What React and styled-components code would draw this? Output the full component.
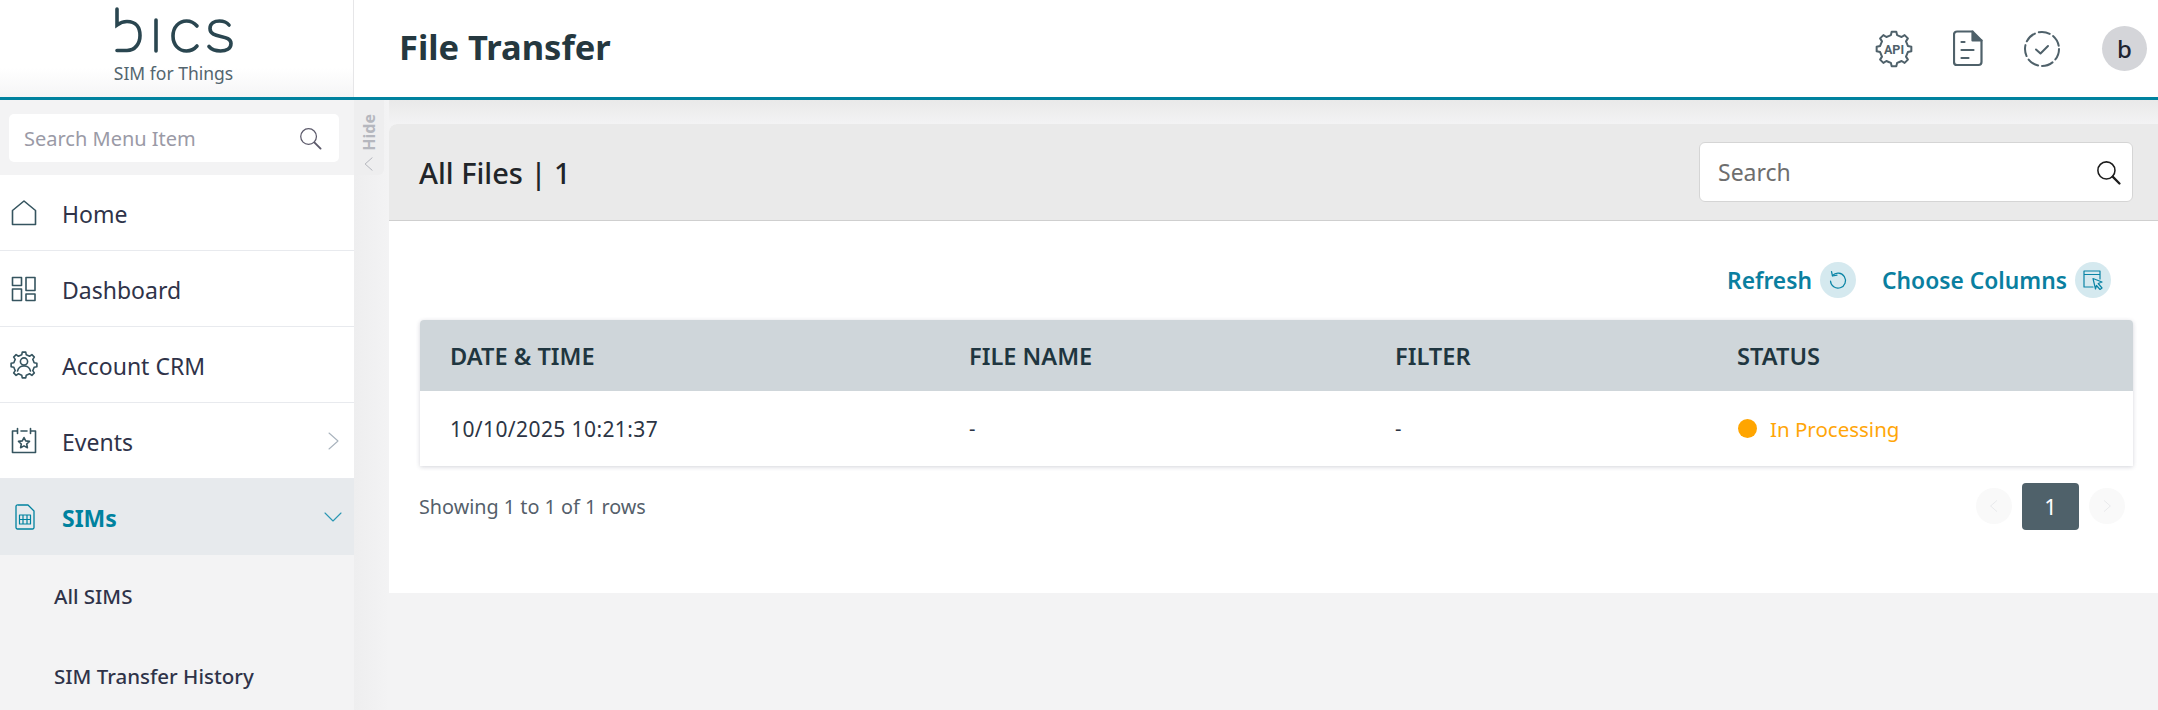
import React from "react";
import styled, { createGlobalStyle } from "styled-components";

const GlobalStyle = createGlobalStyle`
  html, body {
    margin: 0;
    padding: 0;
    height: 100%;
    overflow: hidden;
    background: #f3f3f4;
    font-family: "Noto Sans", "Liberation Sans", sans-serif;
  }
  * { box-sizing: border-box; }
`;

// gear outline with rounded valleys, used by the CRM and API icons
const gearPath = (cx, cy, outer, inner, teeth) => {
  const step = (Math.PI * 2) / teeth;
  const at = (r, a) => `${(cx + r * Math.cos(a)).toFixed(2)} ${(cy + r * Math.sin(a)).toFixed(2)}`;
  let d = "";
  for (let i = 0; i < teeth; i++) {
    const a = i * step - Math.PI / 2;
    d += `${i === 0 ? "M" : "L"}${at(outer, a - step * 0.17)}`;
    d += `L${at(outer, a + step * 0.17)}`;
    d += `L${at(inner, a + step * 0.28)}`;
    d += `Q${at(inner * 0.99, a + step * 0.5)} ${at(inner, a + step * 0.72)}`;
  }
  return d + "Z";
};

const Icon = ({ size = 28, w, h, color = "#35545f", sw = 1.6, children, box = "0 0 28 28" }) => (
  <svg width={w || size} height={h || size} viewBox={box} fill="none" stroke={color} strokeWidth={sw} strokeLinecap="round" strokeLinejoin="round">
    {children}
  </svg>
);

const SearchGlyph = ({ size, color, sw }) => (
  <Icon size={size} color={color} sw={sw} box="0 0 24 24">
    <circle cx="10" cy="10" r="8.2" />
    <path d="M16 16l6.5 6.5" strokeWidth={sw + 0.7} />
  </Icon>
);

const HomeIcon = () => (
  <Icon>
    <path d="M2.5 25.5V11.5L14 2l11.5 9.5v14z" />
  </Icon>
);
const DashIcon = () => (
  <Icon>
    <rect x="2.5" y="2.5" width="9" height="8" />
    <rect x="16" y="2.5" width="9" height="13" />
    <rect x="2.5" y="14" width="9" height="11.5" />
    <rect x="16" y="19" width="9" height="6.5" />
  </Icon>
);
const CrmIcon = () => (
  <Icon>
    <path d={gearPath(14, 14, 13, 10.4, 8)} />
    <circle cx="14" cy="10.5" r="3.6" />
    <path d="M7.5 20c.8-3.5 3.2-5 6.5-5s5.7 1.5 6.5 5" />
  </Icon>
);
const EventIcon = () => (
  <Icon>
    <path d="M7 4H2.5v21.5h23V4H21M11 4h6M7.5 1.5v5M20.5 1.5v5" />
    <path d="M14 10.5l1.7 3.4 3.8.5-2.8 2.6.7 3.7-3.4-1.8-3.4 1.8.7-3.7-2.8-2.6 3.8-.5z" />
  </Icon>
);
const SimIcon = () => (
  <Icon w={20} h={26} box="0 0 20 26" color="#00829f" sw={1.3}>
    <path d="M3 1h10l6 6v16.5a1.5 1.5 0 0 1-1.5 1.5h-15a1.5 1.5 0 0 1-1.5-1.5V2.5A1.5 1.5 0 0 1 3 1z" />
    <path d="M4.5 11h11v9h-11zM4.5 15.5h11M8 11v4.5M12 11v4.5M8 15.5V20M12 15.5V20" strokeWidth="1.2" />
  </Icon>
);
const Chevron = ({ dir, color, size = 18 }) => (
  <Icon size={size} color={color} sw={1.1} box="0 0 18 18">
    {dir === "right" && <path d="M5 1l9 8-9 8" />}
    {dir === "left" && <path d="M13 1L4 9l9 8" />}
    {dir === "down" && <path d="M1 5l8 8 8-8" />}
  </Icon>
);
const ApiIcon = () => (
  <Icon size={38} box="0 0 38 38" color="#4f616a" sw={2}>
    <path d={gearPath(19, 19, 17.5, 14.2, 8)} />
    <text x="19" y="23.5" fontFamily="Roboto, sans-serif" fontWeight="700" fontSize="12.5" textAnchor="middle" fill="#4f616a" stroke="none">API</text>
  </Icon>
);
const DocIcon = () => (
  <Icon w={30} h={37} box="0 0 30 37" color="#4f616a" sw={2.2}>
    <path d="M4 1.5h15.5l9 9V32a3 3 0 0 1-3 3H4a3 3 0 0 1-3-3V4.5a3 3 0 0 1 3-3z" />
    <path d="M19.5 1.5v9h9" fill="#4f616a" />
    <path d="M8.5 12h3M8.5 20h12M8.5 28h7" />
  </Icon>
);
const TaskIcon = () => (
  <Icon size={38} box="0 0 38 38" color="#4f616a" sw={2}>
    <circle cx="19" cy="19" r="17" strokeDasharray="11.26 4" />
    <path d="M13 19.5l4.5 4 7.5-7.5" />
  </Icon>
);
const RefreshIcon = () => (
  <Icon size={20} box="0 0 20 20" color="#0a84a5" sw={1.2}>
    <path d="M4.5 5.5a7.5 7.5 0 1 1-2 5.5" />
    <path d="M3.5 1.5l1 4.5 4.5-.8" />
  </Icon>
);
const ColumnsIcon = () => (
  <Icon size={20} box="0 0 20 20" color="#0a84a5" sw={1.2}>
    <path d="M17 9V1H1v16h9M1 4.5h16" />
    <path d="M10 8.5l9 3.5-3.8 1.5L19 18l-2 1.5-3.5-4-1 3.5z" fill="#d5e9ef" />
  </Icon>
);

const Page = styled.div`
  height: 710px;
  width: 2158px;
  display: flex;
  flex-direction: column;
  overflow: hidden;
  color: #2f3349;
`;

const Header = styled.header`
  flex: 0 0 100px;
  display: flex;
  background: #fff;
  border-bottom: 3px solid #00829f;
`;

const LogoCell = styled.div`
  flex: 0 0 354px;
  display: flex;
  flex-direction: column;
  align-items: center;
  padding: 7px 6px 0 0;
  border-right: 1px solid #e6e6e8;
  background: linear-gradient(#fff 70%, #f5f5f6);
`;

const Tagline = styled.div`
  margin-top: 8px;
  font-size: 17.5px;
  line-height: 22px;
  color: #53656e;
`;

const TitleBar = styled.div`
  flex: 1;
  display: flex;
  align-items: center;
  justify-content: space-between;
  padding: 0 11px 0 45px;
`;

const PageTitle = styled.h1`
  margin: 0 0 5px;
  font-size: 34.5px;
  font-weight: 700;
  color: #25383f;
`;

const HeaderTools = styled.div`
  display: flex;
  align-items: center;
`;

const ToolSlot = styled.div`
  display: flex;
  justify-content: center;
  width: 74px;
`;

const Avatar = styled.div`
  width: 45px;
  height: 45px;
  margin-left: 23px;
  border-radius: 50%;
  background: #d4d5d9;
  display: flex;
  align-items: center;
  justify-content: center;
  font-size: 24px;
  font-weight: 500;
  color: #1d2430;
`;

const Body = styled.div`
  flex: 1;
  display: flex;
  min-height: 0;
`;

const Sidebar = styled.aside`
  flex: 0 0 354px;
  display: flex;
  flex-direction: column;
  background: #fff;
`;

const MenuSearchWrap = styled.div`
  flex: 0 0 75px;
  padding: 14px 15px 13px 9px;
  background: #f3f3f4;
`;

const MenuSearch = styled.div`
  height: 48px;
  background: #fff;
  border-radius: 5px;
  display: flex;
  align-items: center;
  justify-content: space-between;
  padding: 0 17px 0 15px;
  font-size: 20px;
  color: #9a9aa6;
`;

const MenuRow = styled.div`
  flex: 0 0 76px;
  display: flex;
  align-items: center;
  padding: 0 12px 0 10px;
  border-bottom: 1px solid ${(p) => (p.$active ? "transparent" : "#e8eaee")};
  background: ${(p) => (p.$active ? "#e7eaed" : "#fff")};
  color: ${(p) => (p.$active ? "#00829f" : "#2f3349")};
  font-size: 23px;
  font-weight: ${(p) => (p.$active ? 700 : 400)};
`;

const MenuIcon = styled.span`
  flex: 0 0 52px;
  display: flex;
  padding-left: ${(p) => (p.$inset ? 5 : 0)}px;
`;

const MenuLabel = styled.span`
  flex: 1;
  padding-top: 2px;
`;

const SubMenu = styled.div`
  flex: 1;
  background: #f3f3f4;
  padding: 24px 0 0 54px;
`;

const SubItem = styled.div`
  height: 80px;
  font-size: 20.5px;
  line-height: 34px;
  font-weight: 500;
  color: #2f3349;
`;

const Gutter = styled.div`
  flex: 0 0 35px;
  background: linear-gradient(90deg, #eeeeef, #f3f3f4);
`;

const HideTab = styled.div`
  width: 30px;
  height: 75px;
  background: #eeeeef;
  border-radius: 0 0 6px 0;
  display: flex;
  flex-direction: column;
  align-items: center;
  padding-top: 14px;
  gap: 6px;
`;

const HideLabel = styled.span`
  writing-mode: vertical-rl;
  transform: rotate(180deg);
  font-size: 16px;
  font-weight: 700;
  color: #b5b7be;
  line-height: 16px;
`;

const Content = styled.main`
  flex: 1;
  padding-top: 24px;
  background: linear-gradient(#e9e9e9, #f3f3f4 24px);
  min-width: 0;
`;

const Panel = styled.section`
  height: 469px;
  background: #fff;
  border-radius: 8px 0 0 0;
  overflow: hidden;
`;

const PanelHead = styled.div`
  height: 97px;
  background: #eaeaea;
  border-bottom: 1px solid #cfcfcf;
  display: flex;
  align-items: center;
  justify-content: space-between;
  padding: 0 25px 0 30px;
`;

const PanelTitle = styled.h2`
  margin: 0;
  font-size: 29px;
  font-weight: 500;
  color: #212529;
`;

const TableSearch = styled.div`
  width: 434px;
  height: 60px;
  background: #fff;
  border: 1px solid #d5d5d5;
  border-radius: 6px;
  display: flex;
  align-items: center;
  justify-content: space-between;
  padding: 0 11px 0 18px;
  font-size: 23px;
  color: #6e6e6e;
`;

const PanelBody = styled.div`
  padding: 41px 25px 0 31px;
`;

const Actions = styled.div`
  display: flex;
  justify-content: flex-end;
  gap: 26px;
  padding-right: 22px;
  height: 58px;
`;

const ActionButton = styled.div`
  display: flex;
  align-items: center;
  align-self: flex-start;
  gap: 8px;
  font-size: 22.8px;
  font-weight: 600;
  color: #0a7fa0;
`;

const ActionIcon = styled.span`
  width: 36px;
  height: 36px;
  border-radius: 50%;
  background: #d5e9ef;
  display: flex;
  align-items: center;
  justify-content: center;
`;

const Table = styled.div`
  border-radius: 4px 4px 0 0;
  box-shadow: 0 1px 4px rgba(60, 64, 90, 0.22);
  background: #fff;
`;

const Row = styled.div`
  display: grid;
  grid-template-columns: 519px 426px 342px 1fr;
  align-items: center;
  height: ${(p) => (p.$head ? 71 : 75)}px;
  background: ${(p) => (p.$head ? "#cfd6da" : "#fff")};
  border-radius: ${(p) => (p.$head ? "4px 4px 0 0" : "0")};
  color: ${(p) => (p.$head ? "#1f3640" : "#2c3545")};
  font-size: ${(p) => (p.$head ? 23.6 : 20)}px;
  font-weight: ${(p) => (p.$head ? 600 : 400)};
`;

const Cell = styled.div`
  padding-left: 30px;
`;

const DateCell = styled(Cell)`
  font-size: 21px;
  letter-spacing: 0.4px;
`;

const Status = styled.div`
  display: flex;
  align-items: center;
  gap: 13px;
  padding-left: 31px;
  font-size: 20.5px;
  color: #ffa609;
`;

const Dot = styled.span`
  width: 19px;
  height: 19px;
  border-radius: 50%;
  background: #ffa500;
`;

const Footer = styled.div`
  display: flex;
  align-items: center;
  justify-content: space-between;
  height: 64px;
  margin: 8px 0 0 -1px;
  font-size: 19.8px;
  color: #555f6b;
`;

const Pager = styled.div`
  display: flex;
  align-items: center;
  gap: 10px;
  padding-right: 8px;
`;

const PagerArrow = styled.span`
  width: 36px;
  height: 36px;
  border-radius: 50%;
  background: #f9f9f9;
  display: flex;
  align-items: center;
  justify-content: center;
`;

const PagerCurrent = styled.span`
  width: 57px;
  height: 47px;
  border-radius: 4px;
  background: #4f616a;
  color: #fff;
  font-size: 22px;
  display: flex;
  align-items: center;
  justify-content: center;
`;

const menu = [
  { label: "Home", icon: <HomeIcon /> },
  { label: "Dashboard", icon: <DashIcon /> },
  { label: "Account CRM", icon: <CrmIcon /> },
  { label: "Events", icon: <EventIcon />, more: true },
];

export default function App() {
  return (
    <Page>
      <GlobalStyle />
      <Header>
        <LogoCell>
          <svg width="120" height="47" viewBox="0 0 120 47" fill="none" stroke="#2a4650" strokeWidth="3.6" strokeLinecap="round">
            <path d="M3 2v16c4-3 7-3.5 10-3.5 9 0 13 6 13 14s-5 15-13 15H3" />
            <path d="M42 13v31" />
            <path d="M83 19c-3-3.5-6-5-10.5-5C65 14 59 20 59 29s6 15 13.5 15c4.5 0 7.5-1.5 10.5-5" />
            <path d="M115 18c-2-2.5-6-4-9.5-4-5 0-9.5 2-9.5 7.5 0 11 21 5 21 15 0 5.5-5 7.5-10.5 7.5-4.5 0-9-1.5-11.5-4.5" />
          </svg>
          <Tagline>SIM for Things</Tagline>
        </LogoCell>
        <TitleBar>
          <PageTitle>File Transfer</PageTitle>
          <HeaderTools>
            <ToolSlot><ApiIcon /></ToolSlot>
            <ToolSlot><DocIcon /></ToolSlot>
            <ToolSlot><TaskIcon /></ToolSlot>
            <Avatar>b</Avatar>
          </HeaderTools>
        </TitleBar>
      </Header>
      <Body>
        <Sidebar>
          <MenuSearchWrap>
            <MenuSearch>
              Search Menu Item
              <SearchGlyph size={23} color="#5c5a6b" sw={1.3} />
            </MenuSearch>
          </MenuSearchWrap>
          {menu.map((item) => (
            <MenuRow key={item.label}>
              <MenuIcon>{item.icon}</MenuIcon>
              <MenuLabel>{item.label}</MenuLabel>
              {item.more && <Chevron dir="right" color="#a9b3bd" />}
            </MenuRow>
          ))}
          <MenuRow $active>
            <MenuIcon $inset><SimIcon /></MenuIcon>
            <MenuLabel>SIMs</MenuLabel>
            <Chevron dir="down" color="#2a97b3" />
          </MenuRow>
          <SubMenu>
            <SubItem>All SIMS</SubItem>
            <SubItem>SIM Transfer History</SubItem>
          </SubMenu>
        </Sidebar>
        <Gutter>
          <HideTab>
            <HideLabel>Hide</HideLabel>
            <Chevron dir="left" color="#a9abb3" size={14} />
          </HideTab>
        </Gutter>
        <Content>
          <Panel>
            <PanelHead>
              <PanelTitle>All Files | 1</PanelTitle>
              <TableSearch>
                Search
                <SearchGlyph size={25} color="#1d1d1d" sw={1.5} />
              </TableSearch>
            </PanelHead>
            <PanelBody>
              <Actions>
                <ActionButton>Refresh<ActionIcon><RefreshIcon /></ActionIcon></ActionButton>
                <ActionButton>Choose Columns<ActionIcon><ColumnsIcon /></ActionIcon></ActionButton>
              </Actions>
              <Table>
                <Row $head>
                  <Cell>DATE &amp; TIME</Cell>
                  <Cell>FILE NAME</Cell>
                  <Cell>FILTER</Cell>
                  <Cell>STATUS</Cell>
                </Row>
                <Row>
                  <DateCell>10/10/2025 10:21:37</DateCell>
                  <Cell>-</Cell>
                  <Cell>-</Cell>
                  <Status><Dot />In Processing</Status>
                </Row>
              </Table>
              <Footer>
                Showing 1 to 1 of 1 rows
                <Pager>
                  <PagerArrow><Chevron dir="left" color="#e2e4e6" size={12} /></PagerArrow>
                  <PagerCurrent>1</PagerCurrent>
                  <PagerArrow><Chevron dir="right" color="#e2e4e6" size={12} /></PagerArrow>
                </Pager>
              </Footer>
            </PanelBody>
          </Panel>
        </Content>
      </Body>
    </Page>
  );
}
